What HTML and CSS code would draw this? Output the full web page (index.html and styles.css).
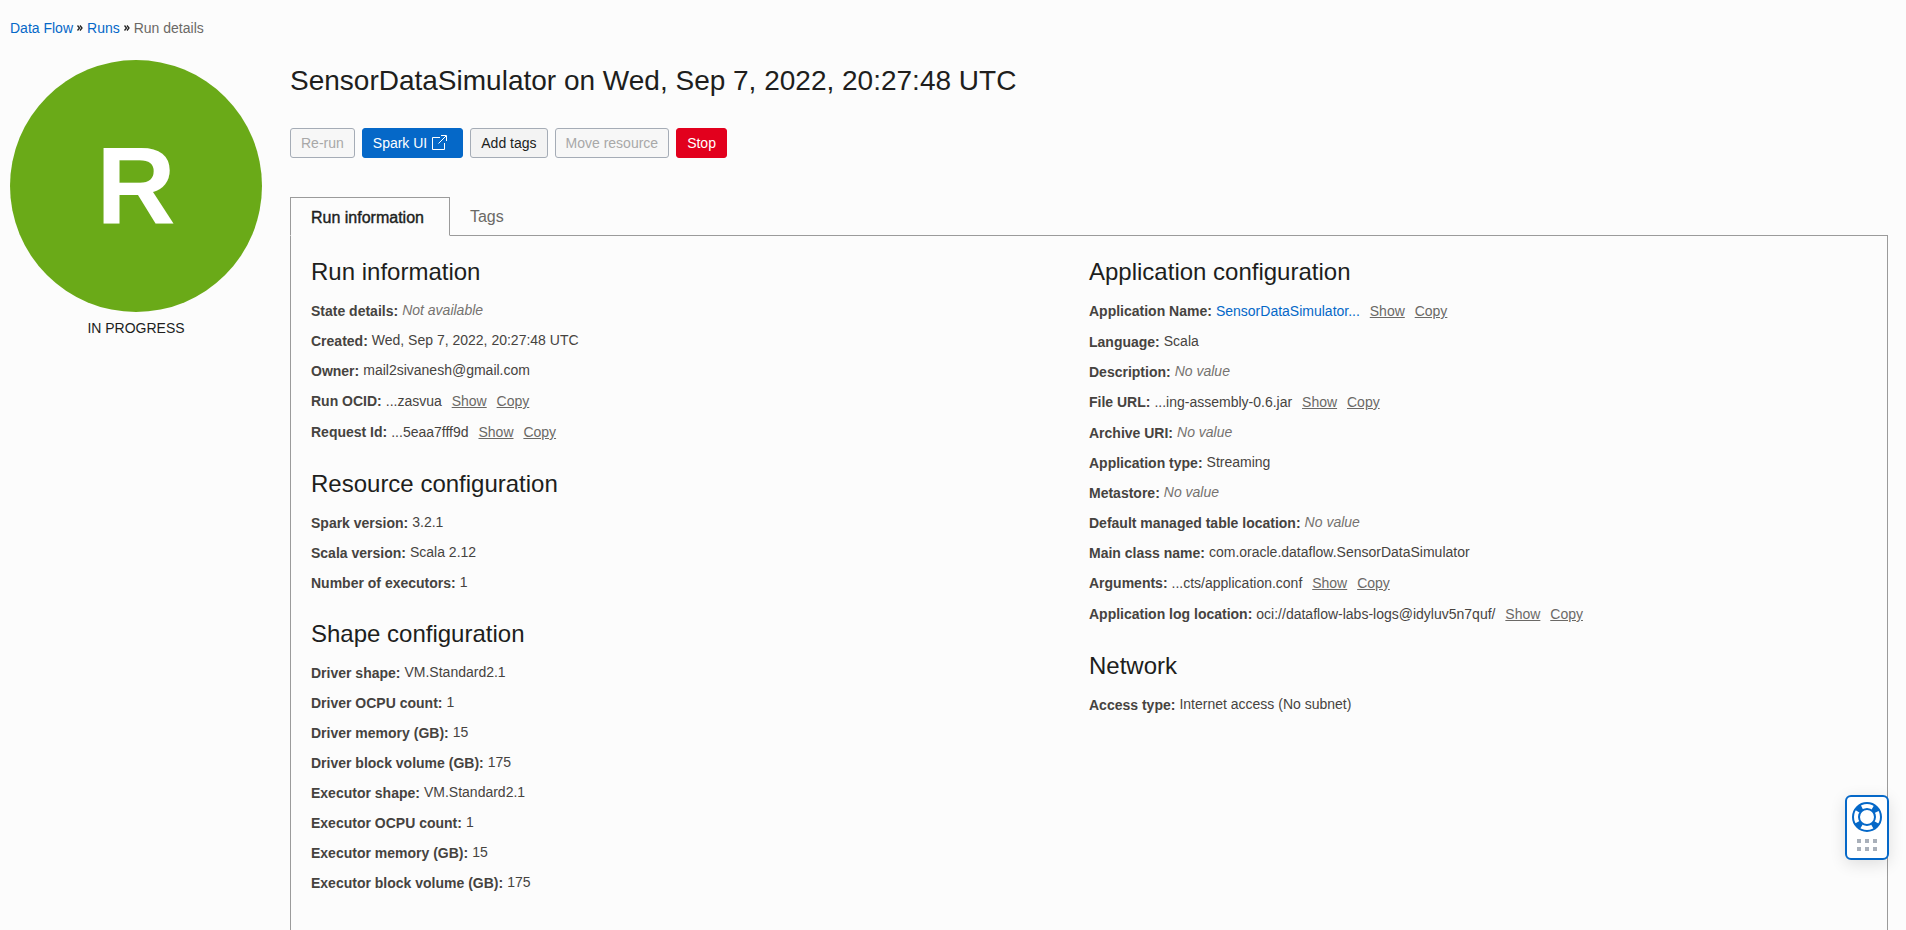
FILE: index.html
```html
<!DOCTYPE html>
<html lang="en">
<head>
<meta charset="utf-8">
<title>Run details</title>
<link rel="stylesheet" href="styles.css">
</head>
<body>
<div class="page">
  <nav class="breadcrumb" aria-label="Breadcrumb">
    <a href="#">Data Flow</a>
    <svg class="chevrons" viewBox="0 0 6 6" aria-hidden="true"><path d="M.5 .5 2.5 3 .5 5.500M3 .5 5 3 3 5.500"/></svg>
    <a href="#">Runs</a>
    <svg class="chevrons" viewBox="0 0 6 6" aria-hidden="true"><path d="M.5 .5 2.5 3 .5 5.500M3 .5 5 3 3 5.500"/></svg>
    <span>Run details</span>
  </nav>
  <div class="layout">
    <aside class="status">
      <div class="status-badge">R</div>
      <div class="status-text">IN PROGRESS</div>
    </aside>
    <main class="main">
      <h1>SensorDataSimulator on Wed, Sep 7, 2022, 20:27:48 UTC</h1>
      <div class="actions">
        <button class="btn" type="button" disabled>Re-run</button>
        <button class="btn btn-primary" type="button">Spark UI
          <svg class="external" viewBox="0 0 16 16" aria-hidden="true"><path d="M9 2.500H1.500v12h12V8M7.500 8.500 15 1M10 .5h5.500V6"/></svg>
        </button>
        <button class="btn" type="button">Add tags</button>
        <button class="btn" type="button" disabled>Move resource</button>
        <button class="btn btn-danger" type="button">Stop</button>
      </div>
      <div class="tabs" role="tablist">
        <button class="tab tab-active" type="button" role="tab" aria-selected="true">Run information</button>
        <button class="tab" type="button" role="tab" aria-selected="false">Tags</button>
      </div>
      <div class="panel" role="tabpanel">
        <div class="column">
          <section>
            <h2>Run information</h2>
            <dl>
              <div class="row"><dt>State details:</dt><dd class="empty">Not available</dd></div>
              <div class="row"><dt>Created:</dt><dd>Wed, Sep 7, 2022, 20:27:48 UTC</dd></div>
              <div class="row"><dt>Owner:</dt><dd>mail2sivanesh@gmail.com</dd></div>
              <div class="row row-links"><dt>Run OCID:</dt><dd>...zasvua <a href="#">Show</a> <a href="#">Copy</a></dd></div>
              <div class="row row-links"><dt>Request Id:</dt><dd>...5eaa7fff9d <a href="#">Show</a> <a href="#">Copy</a></dd></div>
            </dl>
          </section>
          <section>
            <h2>Resource configuration</h2>
            <dl>
              <div class="row"><dt>Spark version:</dt><dd>3.2.1</dd></div>
              <div class="row"><dt>Scala version:</dt><dd>Scala 2.12</dd></div>
              <div class="row"><dt>Number of executors:</dt><dd>1</dd></div>
            </dl>
          </section>
          <section>
            <h2>Shape configuration</h2>
            <dl>
              <div class="row"><dt>Driver shape:</dt><dd>VM.Standard2.1</dd></div>
              <div class="row"><dt>Driver OCPU count:</dt><dd>1</dd></div>
              <div class="row"><dt>Driver memory (GB):</dt><dd>15</dd></div>
              <div class="row"><dt>Driver block volume (GB):</dt><dd>175</dd></div>
              <div class="row"><dt>Executor shape:</dt><dd>VM.Standard2.1</dd></div>
              <div class="row"><dt>Executor OCPU count:</dt><dd>1</dd></div>
              <div class="row"><dt>Executor memory (GB):</dt><dd>15</dd></div>
              <div class="row"><dt>Executor block volume (GB):</dt><dd>175</dd></div>
            </dl>
          </section>
        </div>
        <div class="column">
          <section>
            <h2>Application configuration</h2>
            <dl>
              <div class="row row-links"><dt>Application Name:</dt><dd><a class="name-link" href="#">SensorDataSimulator...</a> <a href="#">Show</a> <a href="#">Copy</a></dd></div>
              <div class="row"><dt>Language:</dt><dd>Scala</dd></div>
              <div class="row"><dt>Description:</dt><dd class="empty">No value</dd></div>
              <div class="row row-links"><dt>File URL:</dt><dd>...ing-assembly-0.6.jar <a href="#">Show</a> <a href="#">Copy</a></dd></div>
              <div class="row"><dt>Archive URI:</dt><dd class="empty">No value</dd></div>
              <div class="row"><dt>Application type:</dt><dd>Streaming</dd></div>
              <div class="row"><dt>Metastore:</dt><dd class="empty">No value</dd></div>
              <div class="row"><dt>Default managed table location:</dt><dd class="empty">No value</dd></div>
              <div class="row"><dt>Main class name:</dt><dd>com.oracle.dataflow.SensorDataSimulator</dd></div>
              <div class="row row-links"><dt>Arguments:</dt><dd>...cts/application.conf <a href="#">Show</a> <a href="#">Copy</a></dd></div>
              <div class="row row-links"><dt>Application log location:</dt><dd>oci://dataflow-labs-logs@idyluv5n7quf/ <a href="#">Show</a> <a href="#">Copy</a></dd></div>
            </dl>
          </section>
          <section>
            <h2>Network</h2>
            <dl>
              <div class="row"><dt>Access type:</dt><dd>Internet access (No subnet)</dd></div>
            </dl>
          </section>
        </div>
      </div>
    </main>
  </div>
</div>
<button class="help" type="button" aria-label="Help">
  <svg class="buoy" viewBox="0 0 30 30" aria-hidden="true">
    <circle class="buoy-bands" cx="15" cy="15" r="11"/>
    <circle class="buoy-line" cx="15" cy="15" r="14"/>
    <circle class="buoy-line" cx="15" cy="15" r="8"/>
  </svg>
  <svg class="grip" viewBox="0 0 20 12" aria-hidden="true"><path d="M0 0h4v4H0zM8 0h4v4H8zM16 0h4v4h-4zM0 8h4v4H0zM8 8h4v4H8zM16 8h4v4h-4z"/></svg>
</button>
</body>
</html>
```
FILE: styles.css
```css
* {
  box-sizing: border-box;
}

body {
  margin: 0;
  background: #fcfcfc;
  color: #46433f;
  font-family: "Liberation Sans", Arial, sans-serif;
  font-size: 14px;
  line-height: 20px;
}

a {
  color: #0568c8;
  text-decoration: none;
}

h1,
h2,
dl,
dd {
  margin: 0;
  font-weight: 400;
}

button {
  font: inherit;
}

.page {
  display: flex;
  flex-direction: column;
  min-height: 100vh;
  padding: 18px 18px 0 10px;
}

.breadcrumb {
  display: flex;
  align-items: center;
  gap: 4px;
  color: #6b6966;
}

.chevrons {
  width: 6px;
  height: 6px;
  fill: none;
  stroke: #222;
  stroke-width: 1.3;
}

.layout {
  display: flex;
  flex: 1;
  gap: 28px;
  padding-top: 22px;
}

.status {
  flex: none;
  width: 252px;
  color: #201e1c;
  text-align: center;
}

.status-badge {
  display: flex;
  align-items: center;
  justify-content: center;
  aspect-ratio: 1;
  border-radius: 50%;
  background: #6aaa18;
  color: #fff;
  font-size: 110px;
  font-weight: 700;
}

.status-text {
  padding-top: 6px;
}

.main {
  display: flex;
  flex: 1;
  flex-direction: column;
  min-width: 0;
}

h1 {
  color: #201e1c;
  font-size: 28px;
  line-height: 42px;
}

.actions {
  display: flex;
  gap: 7px;
  padding: 26px 0 39px;
}

.btn {
  display: flex;
  align-items: center;
  gap: 4px;
  height: 30px;
  padding: 0 10px;
  border: 1px solid #a5acb6;
  border-radius: 3px;
  background: #f3f3f3;
  color: #201e1c;
}

.btn:disabled {
  background: #f7f7f7;
  color: #a8a8a8;
}

.btn-primary {
  padding-right: 15px;
  border-color: #0568c8;
  background: #0568c8;
  color: #fff;
}

.btn-danger {
  border-color: #e2001d;
  background: #e2001d;
  color: #fff;
}

.external {
  width: 16px;
  height: 16px;
  fill: none;
  stroke: #fff;
}

.tabs {
  display: flex;
}

.tab {
  height: 39px;
  padding: 2px 20px 0;
  border: 0;
  border-bottom: 1px solid #9b9b9b;
  background: none;
  color: #6b6966;
  font-size: 16px;
}

.tab-active {
  padding-right: 25px;
  border: 1px solid #9b9b9b;
  border-bottom-color: transparent;
  color: #201e1c;
  -webkit-text-stroke: 0.4px #201e1c;
}

.tabs::after {
  flex: 1;
  border-bottom: 1px solid #9b9b9b;
  content: "";
}

.panel {
  display: grid;
  flex: 1;
  grid-template-columns: 1fr 1fr;
  padding: 20px 20px 32px;
  border: solid #9b9b9b;
  border-width: 0 1px;
}

.column {
  display: flex;
  flex-direction: column;
  gap: 15px;
}

h2 {
  padding-bottom: 13px;
  color: #201e1c;
  font-size: 24px;
  line-height: 32px;
}

.row {
  display: flex;
  gap: 4px;
  height: 30px;
}

.row-links {
  height: 31px;
}

dt {
  font-weight: 700;
}

dd {
  line-height: 18px;
}

.row-links dd {
  line-height: 20px;
}

.empty {
  color: #75726f;
  font-style: italic;
}

.row-links a {
  margin-left: 6px;
  color: #6b6966;
  text-decoration: underline;
}

.row-links .name-link {
  margin-left: 0;
  color: #0568c8;
  text-decoration: none;
}

.help {
  position: fixed;
  right: 17px;
  bottom: 70px;
  display: flex;
  flex-direction: column;
  align-items: center;
  gap: 7px;
  width: 44px;
  padding: 5px 0 7px;
  border: 2px solid #0568c8;
  border-radius: 6px;
  background: #fff;
  box-shadow: 0 4px 16px rgba(0, 0, 0, 0.12);
}

.buoy {
  width: 30px;
  height: 30px;
  fill: none;
  stroke: #0568c8;
}

.buoy-line {
  stroke-width: 2;
}

.buoy-bands {
  stroke-width: 6;
  stroke-dasharray: 6 11.279;
  stroke-dashoffset: -5.640;
}

.grip {
  width: 20px;
  height: 12px;
  fill: #a9b0ba;
}
```
